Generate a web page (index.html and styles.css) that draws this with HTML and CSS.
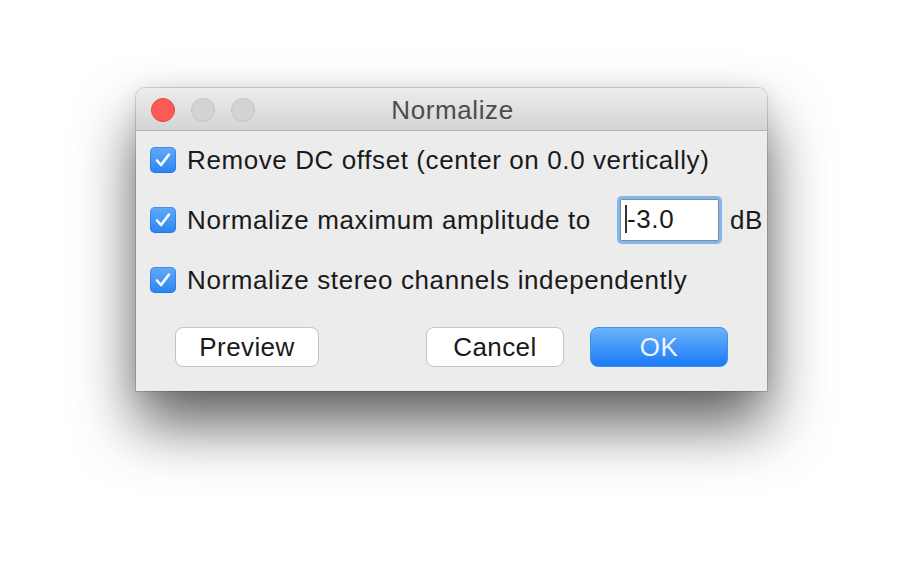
FILE: index.html
```html
<!DOCTYPE html>
<html lang="en">
  <head>
    <meta charset="UTF-8" />
    <title>Normalize</title>
    <link rel="stylesheet" href="styles.css">
  </head>
  <body>
    <div class="dialog">
      <div class="titlebar">
        <div class="lights">
          <span class="light close"></span>
          <span class="light"></span>
          <span class="light"></span>
        </div>
        <div class="title">Normalize</div>
      </div>

      <div class="content">
        <label class="row">
          <span class="check">
            <svg viewBox="0 0 26 26" width="26" height="26">
              <path d="M7 13.5 L11 18 L19 7.5" fill="none" stroke="#fff" stroke-width="2.6" stroke-linecap="round" stroke-linejoin="round" />
            </svg>
          </span>
          <span class="text">Remove DC offset (center on 0.0 vertically)</span>
        </label>

        <label class="row">
          <span class="check">
            <svg viewBox="0 0 26 26" width="26" height="26">
              <path d="M7 13.5 L11 18 L19 7.5" fill="none" stroke="#fff" stroke-width="2.6" stroke-linecap="round" stroke-linejoin="round" />
            </svg>
          </span>
          <span class="text amp">Normalize maximum amplitude to</span>
          <span class="field"><span class="caret"></span>-3.0</span>
          <span class="unit">dB</span>
        </label>

        <label class="row">
          <span class="check">
            <svg viewBox="0 0 26 26" width="26" height="26">
              <path d="M7 13.5 L11 18 L19 7.5" fill="none" stroke="#fff" stroke-width="2.6" stroke-linecap="round" stroke-linejoin="round" />
            </svg>
          </span>
          <span class="text">Normalize stereo channels independently</span>
        </label>

        <div class="buttons">
          <button class="btn preview">Preview</button>
          <div class="right">
            <button class="btn">Cancel</button>
            <button class="btn ok">OK</button>
          </div>
        </div>
      </div>
    </div>
  </body>
</html>
```

FILE: styles.css
```css
html,
body {
  height: 100%;
}

body {
  margin: 0;
  background: #ffffff;
  font-family: "Liberation Sans", Arial, sans-serif;
  color: #1a1a1a;
  overflow: hidden;
}

.dialog {
  width: 631px;
  margin: 88px 0 0 136px;
  background: #ececec;
  border-radius: 9px 9px 0 0;
  box-shadow: 0 34px 60px rgba(0, 0, 0, 0.62), 0 0 20px rgba(0, 0, 0, 0.08),
    0 0 0 1px rgba(0, 0, 0, 0.14);
  overflow: hidden;
}

.titlebar {
  position: relative;
  height: 42px;
  background: linear-gradient(#ededed, #d4d4d4);
  border-bottom: 1px solid #b3b3b3;
  display: flex;
  align-items: center;
  justify-content: center;
}

.lights {
  position: absolute;
  left: 15px;
  top: 10px;
  display: flex;
  gap: 16px;
}

.light {
  width: 22px;
  height: 22px;
  border-radius: 50%;
  background: #d3d3d3;
  border: 1px solid #c3c3c3;
}

.light.close {
  background: #fc5c55;
  border-color: #e1463f;
}

.title {
  font-size: 26px;
  letter-spacing: 0.6px;
  color: #4c4c4c;
  margin: 3px 0 0 2px;
}

.content {
  padding: 16px 0 24px 14px;
}

.row {
  display: flex;
  align-items: center;
  height: 26px;
  margin-bottom: 34px;
  font-size: 26px;
  letter-spacing: 0.6px;
}

.row:nth-child(3) {
  margin-bottom: 34px;
}

.check {
  width: 26px;
  height: 26px;
  border-radius: 5px;
  background: linear-gradient(#62aaf8, #2b84f3);
  box-shadow: inset 0 0 0 1px rgba(20, 90, 200, 0.35);
  margin-right: 11px;
  flex-shrink: 0;
}

.check svg {
  display: block;
}

.text {
  white-space: nowrap;
}

.amp {
  width: 409px;
}

.field {
  position: relative;
  box-sizing: border-box;
  width: 99px;
  height: 42px;
  margin-left: 24px;
  padding: 0 0 2px 4px;
  background: #ffffff;
  border: 1px solid #8a8a8a;
  box-shadow: 0 0 0 3px #80b6f5;
  border-radius: 2px;
  display: flex;
  align-items: center;
  font-size: 26px;
  letter-spacing: 0.6px;
}

.caret {
  width: 2px;
  height: 28px;
  background: #333333;
}

.unit {
  margin-left: 11px;
}

.buttons {
  display: flex;
  justify-content: space-between;
  padding: 0 39px 0 25px;
}

.right {
  display: flex;
  gap: 26px;
}

.btn {
  height: 40px;
  width: 138px;
  font-family: "Liberation Sans", Arial, sans-serif;
  font-size: 26px;
  letter-spacing: 0.4px;
  color: #1a1a1a;
  background: #ffffff;
  border: 1px solid #c4c4c4;
  border-radius: 8px;
  padding: 1px 0 0;
}

.btn.preview {
  width: 144px;
}

.btn.ok {
  background: linear-gradient(#6cb3fb, #1a7af5);
  border-color: #3f8ff0;
  color: #eef5ff;
}
```
